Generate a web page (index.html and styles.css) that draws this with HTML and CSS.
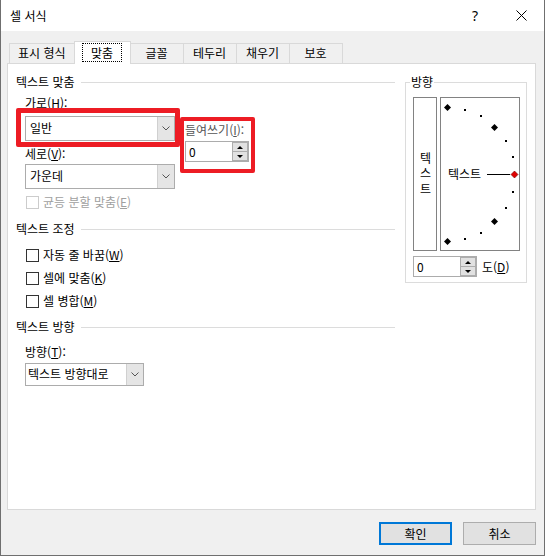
FILE: index.html
```html
<!DOCTYPE html>
<html lang="ko">
<head>
<meta charset="utf-8">
<title>셀 서식</title>
<link rel="stylesheet" href="styles.css">
</head>
<body>
<div class="window">
  <div class="titlebar">
    <span class="title">셀 서식</span>
    <span class="tb-btn help">?</span>
    <span class="tb-btn close"><svg width="11" height="11" viewBox="0 0 11 11"><path d="M0.5 0.5 L10.5 10.5 M10.5 0.5 L0.5 10.5" stroke="#000" stroke-width="1" fill="none"/></svg></span>
  </div>
  <div class="content">
    <div class="tabs">
      <div class="tab">표시 형식</div>
      <div class="tab selected"><span class="focus">맞춤</span></div>
      <div class="tab">글꼴</div>
      <div class="tab">테두리</div>
      <div class="tab">채우기</div>
      <div class="tab">보호</div>
    </div>
    <div class="panel">
      <div class="left">
        <div class="group-head"><span>텍스트 맞춤</span><i class="rule"></i></div>
        <div class="align-row">
          <div class="col-a">
            <div class="lbl">가로(<u>H</u>):</div>
            <div class="combo combo-1"><span class="val">일반</span><span class="drop"><svg width="8" height="5" viewBox="0 0 8 5"><path d="M0.5 0.5 L4 4 L7.5 0.5" stroke="#555" fill="none"/></svg></span></div>
            <div class="lbl lbl-2">세로(<u>V</u>):</div>
            <div class="combo combo-2"><span class="val">가운데</span><span class="drop"><svg width="8" height="5" viewBox="0 0 8 5"><path d="M0.5 0.5 L4 4 L7.5 0.5" stroke="#555" fill="none"/></svg></span></div>
          </div>
          <div class="col-b">
            <div class="lbl indent-lbl">들여쓰기(<u>I</u>):</div>
            <div class="spin indent-spin"><span class="val">0</span><span class="spin-btns"><span class="sb"><i class="tri-up"></i></span><span class="sb"><i class="tri-down"></i></span></span></div>
          </div>
        </div>
        <div class="check disabled check-e"><span class="box"></span><span>균등 분할 맞춤(<u>E</u>)</span></div>
        <div class="group-head gh-2"><span>텍스트 조정</span><i class="rule"></i></div>
        <div class="check check-first"><span class="box"></span><span>자동 줄 바꿈(<u>W</u>)</span></div>
        <div class="check"><span class="box"></span><span>셀에 맞춤(<u>K</u>)</span></div>
        <div class="check"><span class="box"></span><span>셀 병합(<u>M</u>)</span></div>
        <div class="group-head gh-3"><span>텍스트 방향</span><i class="rule"></i></div>
        <div class="lbl dir-lbl">방향(<u>T</u>):</div>
        <div class="combo combo-3"><span class="val">텍스트 방향대로</span><span class="drop"><svg width="8" height="5" viewBox="0 0 8 5"><path d="M0.5 0.5 L4 4 L7.5 0.5" stroke="#555" fill="none"/></svg></span></div>
      </div>
      <fieldset class="orient">
        <legend>방향</legend>
        <div class="orient-body">
          <div class="vbox"><span class="vtext">텍스트</span></div>
          <div class="dial">
            <svg width="78" height="152" viewBox="0 0 78 152">
              <polygon points="6.5,6 10,9.5 6.5,13 3,9.5" fill="#000"/>
              <rect x="23" y="11" width="2" height="2" fill="#000"/>
              <rect x="39" y="17" width="2" height="2" fill="#000"/>
              <polygon points="53.5,26 57,29.5 53.5,33 50,29.5" fill="#000"/>
              <rect x="64" y="42" width="2" height="2" fill="#000"/>
              <rect x="71" y="58" width="2" height="2" fill="#000"/>
              <text x="7" y="80.5" class="dial-text">텍스트</text>
              <line x1="46" y1="76.5" x2="69" y2="76.5" stroke="#000" stroke-width="1"/>
              <polygon points="73.5,73 77,76.5 73.5,80 70,76.5" fill="#e00000" stroke="#700000" stroke-width="0.6"/>
              <rect x="71" y="93" width="2" height="2" fill="#000"/>
              <rect x="64" y="109" width="2" height="2" fill="#000"/>
              <polygon points="53.5,120 57,123.5 53.5,127 50,123.5" fill="#000"/>
              <rect x="39" y="134" width="2" height="2" fill="#000"/>
              <rect x="23" y="140" width="2" height="2" fill="#000"/>
              <polygon points="6.5,140 10,143.5 6.5,147 3,143.5" fill="#000"/>
            </svg>
          </div>
        </div>
        <div class="deg-row">
          <div class="spin"><span class="val">0</span><span class="spin-btns"><span class="sb"><i class="tri-up"></i></span><span class="sb"><i class="tri-down"></i></span></span></div>
          <span class="deg-lbl">도(<u>D</u>)</span>
        </div>
      </fieldset>
    </div>
    <div class="footer">
      <button class="btn default">확인</button>
      <button class="btn">취소</button>
    </div>
  </div>
  <div class="mark mark-1"></div>
  <div class="mark mark-2"></div>
</div>
</body>
</html>
```

FILE: styles.css
```css
* { box-sizing: border-box; }
html, body { margin: 0; padding: 0; }
body {
  width: 545px;
  height: 556px;
  overflow: hidden;
  background: #f0f0f0;
  font-family: "Noto Sans CJK KR", "Noto Sans", sans-serif;
  font-size: 12px;
  color: #000;
}
u { text-decoration: underline; text-underline-offset: 1px; }

.window {
  position: relative;
  width: 545px;
  height: 556px;
  background: #f0f0f0;
  border: 1px solid #6f6f6f;
  border-top: none;
}

.titlebar {
  height: 31px;
  background: #fff;
  display: flex;
  align-items: center;
  padding-left: 9px;
}
.title { flex: 1; line-height: 16px; }
.tb-btn {
  width: 46px;
  height: 31px;
  display: flex;
  align-items: center;
  justify-content: center;
}
.help { font-family: "Noto Sans", sans-serif; font-size: 14px; }

.content { padding: 10px 0 0 6px; }

.tabs {
  display: flex;
  align-items: flex-end;
  height: 22px;
  padding-left: 2px;
}
.tab {
  height: 20px;
  min-width: 54px;
  padding: 0 8px 2px;
  border: 1px solid #d9d9d9;
  border-bottom: none;
  margin-left: -1px;
  background: #f0f0f0;
  display: flex;
  align-items: center;
  justify-content: center;
  line-height: 16px;
}
.tab:first-child { margin-left: 0; }
.tab.selected {
  height: 23px;
  min-width: 57px;
  margin-bottom: -1px;
  background: #fff;
  position: relative;
  z-index: 1;
  padding-bottom: 2px;
}
.focus {
  outline: 1px dotted #000;
  padding: 0 8px;
  line-height: 17px;
}

.panel {
  width: 529px;
  height: 447px;
  background: #fff;
  border: 1px solid #d9d9d9;
  display: flex;
  align-items: flex-start;
  gap: 10px;
  padding: 10px 0 0 8px;
}
.left { width: 379px; }

.group-head {
  display: flex;
  align-items: center;
  height: 16px;
  line-height: 16px;
}
.group-head .rule {
  flex: 1;
  height: 1px;
  background: #dcdcdc;
  margin-left: 6px;
}
.gh-2 { margin-top: 11px; }
.gh-3 { margin-top: 10px; }

.lbl { height: 16px; line-height: 16px; }

.align-row { display: flex; margin: 5px 0 0 9px; }
.col-a { width: 150px; }
.col-b { margin-left: 10px; padding-top: 27px; }
.lbl-2 { margin-top: 5px; }
.indent-lbl { color: #555; }
.indent-spin { margin-top: 3px; }

.combo {
  display: flex;
  height: 25px;
  border: 1px solid #acacac;
  background: #fff;
}
.combo .val { flex: 1; padding-left: 4px; line-height: 22px; white-space: nowrap; }
.combo .drop {
  width: 17px;
  background: #e5e5e5;
  border-left: 1px solid #d0d0d0;
  display: flex;
  align-items: center;
  justify-content: center;
}
.combo-1 { margin-top: 5px; }
.combo-2 { margin-top: 2px; }
.combo-3 { margin: 3px 0 0 9px; width: 119px; height: 23px; }
.combo-3 .val { padding-left: 2px; line-height: 20px; }
.dir-lbl { margin: 9px 0 0 9px; }

.spin {
  display: flex;
  width: 64px;
  height: 21px;
  border: 1px solid #acacac;
  background: #fff;
}
.spin .val { flex: 1; padding-left: 3px; line-height: 19px; }
.spin-btns { width: 16px; display: flex; flex-direction: column; }
.sb {
  flex: 1;
  background: #e1e1e1;
  border: 1px solid #adadad;
  display: flex;
  align-items: center;
  justify-content: center;
}
.sb + .sb { border-top: none; }
.tri-up, .tri-down { width: 0; height: 0; border-left: 3px solid transparent; border-right: 3px solid transparent; }
.tri-up { border-bottom: 3px solid #000; }
.tri-down { border-top: 3px solid #000; }

.check {
  display: flex;
  align-items: center;
  height: 16px;
  margin: 7px 0 0 10px;
  line-height: 16px;
}
.check .box {
  width: 13px;
  height: 13px;
  border: 1px solid #333;
  background: #fff;
  margin-right: 4px;
}
.check-e { margin-top: 5px; }
.check-first { margin-top: 10px; }
.check.disabled { color: #a0a0a0; }
.check.disabled .box { border-color: #cccccc; }

.orient {
  width: 122px;
  margin: 0;
  padding: 7px 6px 5px 7px;
  border: 1px solid #dcdcdc;
}
.orient legend {
  padding: 0 1px;
  margin-left: -3px;
  line-height: 16px;
}
.orient-body { display: flex; gap: 3px; }
.vbox {
  width: 24px;
  height: 154px;
  border: 1px solid #828282;
  display: flex;
  align-items: center;
  justify-content: center;
}
.vtext {
  writing-mode: vertical-rl;
  text-orientation: upright;
  letter-spacing: 3.5px;
  line-height: 16px;
  margin-top: 3px;
}
.dial {
  width: 80px;
  height: 154px;
  border: 1px solid #828282;
}
.dial svg { display: block; }
.dial-text { font-family: "Noto Sans CJK KR", sans-serif; font-size: 12px; fill: #000; }
.deg-row { display: flex; align-items: center; margin-top: 5px; }
.deg-lbl { margin-left: 5px; }

.footer {
  width: 529px;
  display: flex;
  justify-content: flex-end;
  gap: 11px;
  margin-top: 12px;
}
.btn {
  width: 73px;
  height: 23px;
  border: 1px solid #adadad;
  background: #e1e1e1;
  font: inherit;
  color: #000;
  padding: 0;
}
.btn.default { border: 2px solid #0078d7; }

.mark {
  position: absolute;
  border: 5px solid #ed1c24;
  border-radius: 2px;
  pointer-events: none;
}
.mark-1 { left: 15px; top: 108px; width: 164px; height: 39px; }
.mark-2 { left: 179px; top: 117px; width: 75px; height: 56px; border-width: 4px; }
```
